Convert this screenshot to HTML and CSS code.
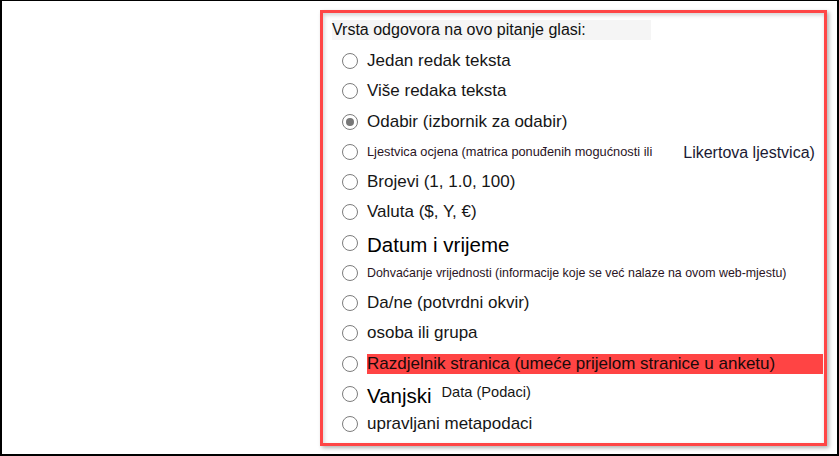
FILE: index.html
```html
<!DOCTYPE html>
<html lang="hr">
<head>
<meta charset="utf-8">
<title>Vrsta odgovora</title>
<link rel="stylesheet" href="styles.css">
</head>
<body>
<div class="frame">
  <div class="panel">
    <div class="title">Vrsta odgovora na ovo pitanje glasi:</div>
    <ul class="options">
      <li class="opt"><span class="radio"></span><span class="label">Jedan redak teksta</span></li>
      <li class="opt"><span class="radio"></span><span class="label">Više redaka teksta</span></li>
      <li class="opt"><span class="radio checked"></span><span class="label">Odabir (izbornik za odabir)</span></li>
      <li class="opt"><span class="radio"></span><span class="label small">Ljestvica ocjena (matrica ponuđenih mogućnosti ili</span><span class="label likert">Likertova ljestvica)</span></li>
      <li class="opt"><span class="radio"></span><span class="label">Brojevi (1, 1.0, 100)</span></li>
      <li class="opt"><span class="radio"></span><span class="label">Valuta ($, Y, €)</span></li>
      <li class="opt"><span class="radio"></span><span class="label big">Datum i vrijeme</span></li>
      <li class="opt"><span class="radio"></span><span class="label small fetch">Dohvaćanje vrijednosti (informacije koje se već nalaze na ovom web-mjestu)</span></li>
      <li class="opt"><span class="radio"></span><span class="label">Da/ne (potvrdni okvir)</span></li>
      <li class="opt"><span class="radio"></span><span class="label">osoba ili grupa</span></li>
      <li class="opt"><span class="radio"></span><span class="label highlight">Razdjelnik stranica (umeće prijelom stranice u anketu)</span></li>
      <li class="opt"><span class="radio"></span><span class="label big">Vanjski</span><span class="label raised">Data (Podaci)</span></li>
      <li class="opt"><span class="radio"></span><span class="label">upravljani metapodaci</span></li>
    </ul>
  </div>
</div>
</body>
</html>
```
FILE: styles.css
```css
html, body {
  margin: 0;
  padding: 0;
  background: #ffffff;
}
body {
  font-family: "Liberation Sans", Arial, sans-serif;
  color: #161616;
}
.frame {
  box-sizing: border-box;
  width: 839px;
  height: 456px;
  border-top: 1px solid #000;
  border-left: 2px solid #000;
  border-right: 2px solid #000;
  border-bottom: 2px solid #000;
  background: #fff;
  padding-top: 9px;
  padding-left: 318px;
}
.panel {
  box-sizing: border-box;
  width: 507px;
  height: 436px;
  border: 3px solid #ff4646;
  box-shadow: 2px 2px 4px rgba(0, 0, 0, 0.3), inset 1px 2px 4px rgba(0, 0, 0, 0.18);
  padding-top: 7px;
}
.title {
  margin-left: 9px;
  width: 319px;
  height: 20px;
  line-height: 20px;
  background: #f5f5f5;
  font-size: 16px;
  color: #111;
}
.options {
  list-style: none;
  margin: 6px 0 0 0;
  padding: 0;
}
.opt {
  height: 30.25px;
  display: flex;
  align-items: center;
  padding-left: 19px;
}
.radio {
  box-sizing: border-box;
  flex: none;
  width: 16px;
  height: 16px;
  border: 1.7px solid #7c7c7c;
  border-radius: 50%;
  margin-right: 9px;
  background: #fff;
  display: flex;
  align-items: center;
  justify-content: center;
}
.radio.checked::after {
  content: "";
  width: 8px;
  height: 8px;
  border-radius: 50%;
  background: #777;
}
.label {
  font-size: 17px;
  white-space: nowrap;
}
.small {
  font-size: 12.8px;
  color: #2a1424;
}
.small.fetch {
  font-size: 12.4px;
}
.likert {
  margin-left: 31px;
  font-size: 16px;
  color: #1a1a33;
  position: relative;
  top: 1px;
}
.big {
  font-size: 20.5px;
  color: #000;
  position: relative;
  top: 2px;
}
.raised {
  font-size: 14.6px;
  margin-left: 10px;
  position: relative;
  top: -2px;
}
.highlight {
  flex: 1;
  margin-right: 1px;
  height: 20px;
  line-height: 20px;
  background: #ff4444;
  color: #1a0a0a;
}
```
